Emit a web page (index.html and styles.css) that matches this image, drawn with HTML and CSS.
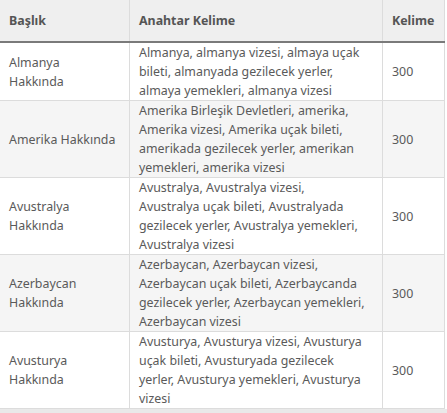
FILE: index.html
```html
<!DOCTYPE html>
<html lang="tr">
<head>
<meta charset="utf-8">
<link rel="stylesheet" href="styles.css">
</head>
<body>
<div class="wrap">
<table class="kw">
<thead>
<tr><th class="c1">Başlık</th><th class="c2">Anahtar Kelime</th><th class="c3">Kelime</th></tr>
</thead>
<tbody>
<tr><td>Almanya<br>Hakkında</td><td>Almanya, almanya vizesi, almaya uçak<br>bileti, almanyada gezilecek yerler,<br>almaya yemekleri, almanya vizesi</td><td>300</td></tr>
<tr class="alt"><td>Amerika Hakkında</td><td>Amerika Birleşik Devletleri, amerika,<br>Amerika vizesi, Amerika uçak bileti,<br>amerikada gezilecek yerler, amerikan<br>yemekleri, amerika vizesi</td><td>300</td></tr>
<tr><td>Avustralya<br>Hakkında</td><td>Avustralya, Avustralya vizesi,<br>Avustralya uçak bileti, Avustralyada<br>gezilecek yerler, Avustralya yemekleri,<br>Avustralya vizesi</td><td>300</td></tr>
<tr class="alt"><td>Azerbaycan<br>Hakkında</td><td>Azerbaycan, Azerbaycan vizesi,<br>Azerbaycan uçak bileti, Azerbaycanda<br>gezilecek yerler, Azerbaycan yemekleri,<br>Azerbaycan vizesi</td><td>300</td></tr>
<tr><td>Avusturya<br>Hakkında</td><td>Avusturya, Avusturya vizesi, Avusturya<br>uçak bileti, Avusturyada gezilecek<br>yerler, Avusturya yemekleri, Avusturya<br>vizesi</td><td>300</td></tr>
</tbody>
</table>
<div class="foot"></div>
</div>
</body>
</html>
```
FILE: styles.css
```css
html, body { margin: 0; padding: 0; background: #fff; }
.wrap { width: 447px; }
.kw {
  border-collapse: collapse;
  width: 445px;
  font-family: "Noto Sans", "Open Sans", sans-serif;
  font-size: 12.4px;
  line-height: 19px;
  color: #5a5a5a;
  table-layout: fixed;
}
.kw th, .kw td {
  border: 1px solid #dcdcdc;
  padding: 0 9px;
  text-align: left;
  vertical-align: middle;
  white-space: nowrap;
  overflow: visible;
}
.kw tr > :first-child { border-left: none; }
.kw th {
  background: #efefef;
  height: 41px;
  font-weight: bold;
  color: #555;
  border-top: none;
  border-bottom: 2px solid #7a7a7a;
}
.c1 { width: 111px; }
.c2 { width: 234px; }
.c3 { width: 43px; }
.kw td { padding-top: 0; padding-bottom: 0; }
.kw tr.alt td { background: #f5f5f5; }
.foot { height: 6px; background: #e9e9e9; }
```
